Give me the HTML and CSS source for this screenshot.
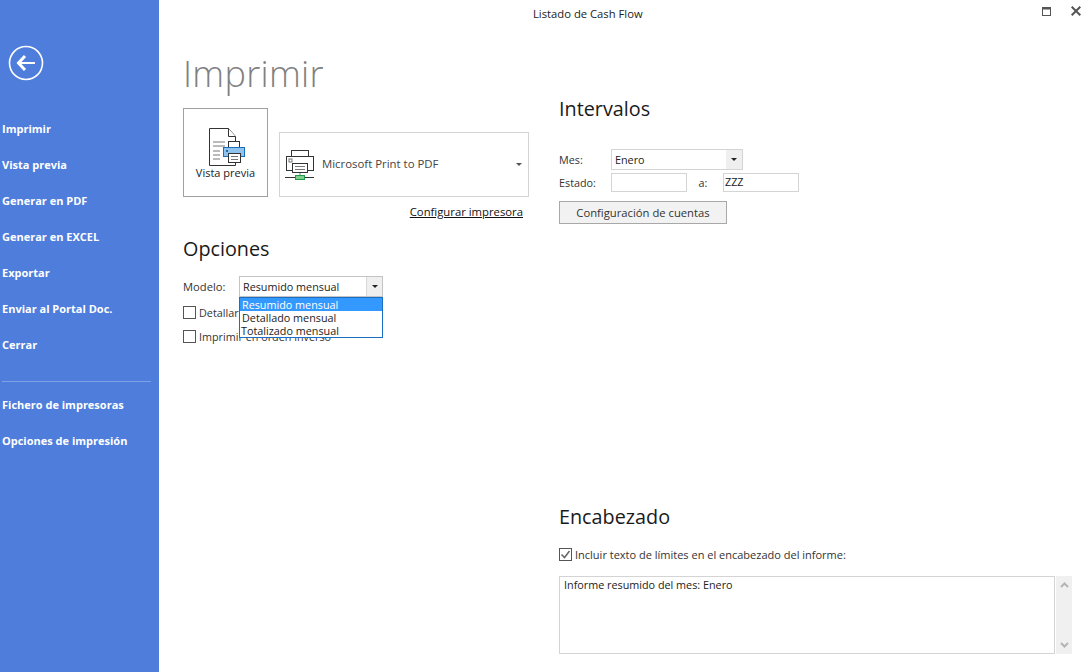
FILE: index.html
```html
<!DOCTYPE html>
<html lang="es">
<head>
<meta charset="utf-8">
<title>Listado de Cash Flow</title>
<link rel="stylesheet" href="styles.css">
</head>
<body>
<div class="window">
  <aside class="sidebar">
    <div class="back">
      <svg width="36" height="36" viewBox="0 0 36 36"><circle cx="18" cy="18" r="16.5" fill="none" stroke="#fff" stroke-width="1.6"/><path d="M10 18h17" stroke="#fff" stroke-width="2" fill="none"/><path d="M17 11L10.500 18l6.500 7" stroke="#fff" stroke-width="3" fill="none"/></svg>
    </div>
    <nav class="nav">
      <a>Imprimir</a><a>Vista previa</a><a>Generar en PDF</a><a>Generar en EXCEL</a><a>Exportar</a><a>Enviar al Portal Doc.</a><a>Cerrar</a>
    </nav>
    <hr class="nav-rule">
    <nav class="nav">
      <a>Fichero de impresoras</a><a>Opciones de impresión</a>
    </nav>
  </aside>
  <main class="content">
    <header class="titlebar">
      <span class="window-title">Listado de Cash Flow</span>
      <div class="window-btns">
        <svg width="9" height="9" viewBox="0 0 9 9"><rect x=".5" y=".5" width="8" height="8" fill="none" stroke="#555"/><rect x="0" y="0" width="9" height="2.5" fill="#555"/></svg>
        <svg width="10" height="10" viewBox="0 0 10 10"><path d="M.7.7l8.600 8.600M9.300.7L.7 9.300" stroke="#555" stroke-width="2" fill="none"/></svg>
      </div>
    </header>
    <div class="panels">
      <section class="col-left">
        <h1 class="page-title">Imprimir</h1>
        <div class="print-row">
          <button class="preview-btn">
            <svg width="37" height="38" viewBox="0 0 37 38">
              <path d="M.5.5h19l7 8v29H.5z" fill="#fff" stroke="#333"/>
              <path d="M19.500.5v8h7" fill="#fff" stroke="#333"/>
              <path d="M4 14h12M4 18h12M4 23h7M4 27h7M4 31h7" stroke="#777"/>
              <rect x="19.500" y="13.500" width="11" height="8" fill="#fff" stroke="#333"/>
              <rect x="14.500" y="19.500" width="21" height="9" fill="#90c2ee" stroke="#1b6fb5"/>
              <rect x="17" y="22" width="2" height="2" fill="#1b6fb5"/>
              <rect x="19.500" y="25.500" width="12" height="9" fill="#fff" stroke="#333"/>
              <path d="M22 28.500h7M22 31.500h7" stroke="#777"/>
            </svg>
            <span>Vista previa</span>
          </button>
          <div class="printer-select">
            <svg class="printer-icon" width="32" height="32" viewBox="0 0 32 32">
              <rect x="7.500" y="1.500" width="17" height="6" fill="#fff" stroke="#333"/>
              <rect x="2.500" y="7.500" width="27" height="14" fill="#fff" stroke="#333"/>
              <rect x="5" y="10" width="3" height="3" fill="#fff" stroke="#777"/>
              <rect x="8.500" y="14.500" width="15" height="9" fill="#fff" stroke="#333"/>
              <path d="M11 17.500h10M11 20.500h10" stroke="#777"/>
              <path d="M16 24v4" stroke="#777"/>
              <path d="M1 28.500h29" stroke="#333"/>
              <rect x="11.500" y="26.500" width="9" height="4" fill="#7fd08f" stroke="#1d9a4a"/>
            </svg>
            <span class="printer-name">Microsoft Print to PDF</span>
            <i class="caret caret-small"></i>
          </div>
        </div>
        <div class="config-row"><a class="config-link">Configurar impresora</a></div>
        <h2 class="heading heading-opciones">Opciones</h2>
        <div class="model-row">
          <label class="field-label model-label">Modelo:</label>
          <div class="combo model-combo">
            <span class="combo-text">Resumido mensual</span>
            <span class="combo-btn"><i class="caret"></i></span>
            <ul class="dropdown">
              <li class="selected">Resumido mensual</li>
              <li>Detallado mensual</li>
              <li class="flush">Totalizado mensual</li>
            </ul>
          </div>
        </div>
        <div class="check-row"><i class="checkbox"></i><span>Detallar cuentas</span></div>
        <div class="check-row"><i class="checkbox"></i><span>Imprimir en orden inverso</span></div>
      </section>
      <section class="col-right">
        <h2 class="heading heading-intervalos">Intervalos</h2>
        <div class="form-row mes-row">
          <label class="field-label range-label">Mes:</label>
          <div class="combo mes-combo">
            <span class="combo-text">Enero</span>
            <span class="combo-btn"><i class="caret"></i></span>
          </div>
        </div>
        <div class="form-row estado-row">
          <label class="field-label range-label">Estado:</label>
          <div class="input input-from"></div>
          <label class="field-label to-label">a:</label>
          <div class="input input-to">ZZZ</div>
        </div>
        <button class="accounts-btn">Configuración de cuentas</button>
        <h2 class="heading heading-encabezado">Encabezado</h2>
        <div class="check-row include-row">
          <i class="checkbox checked"><svg width="11" height="11" viewBox="0 0 11 11"><path d="M1.500 5.500l3 3 5-6.500" stroke="#666" stroke-width="1.500" fill="none"/></svg></i>
          <span>Incluir texto de límites en el encabezado del informe:</span>
        </div>
        <div class="memo-wrap">
          <div class="memo">Informe resumido del mes: Enero</div>
          <div class="scrollbar">
            <svg width="9" height="6" viewBox="0 0 9 6"><path d="M1 5l3.500-3.500L8 5" stroke="#b5b5b5" stroke-width="2" fill="none"/></svg>
            <svg width="9" height="6" viewBox="0 0 9 6"><path d="M1 1l3.500 3.500L8 1" stroke="#b5b5b5" stroke-width="2" fill="none"/></svg>
          </div>
        </div>
      </section>
    </div>
  </main>
</div>
</body>
</html>
```
FILE: styles.css
```css
* { box-sizing: border-box; }
html, body { margin: 0; height: 100%; }
body {
  font-family: "Open Sans", "Noto Sans", sans-serif;
  font-size: 10.8px;
  color: #222;
  background: #fff;
  overflow: hidden;
}
.window { display: flex; width: 1091px; height: 672px; }
.sidebar {
  width: 159px;
  flex: none;
  background: #4e7ddc;
  color: #fff;
  padding-top: 45px;
}
.back { height: 36px; padding-left: 8px; margin-bottom: 29px; }
.back svg { display: block; }
.nav a {
  display: flex;
  align-items: center;
  height: 36px;
  padding-left: 2px;
  font-weight: 700;
  font-size: 11px;
}
.nav-rule {
  margin: 19px 8px 4px 2px;
  border: 0;
  border-top: 1px solid #7fa2e6;
}
.content { flex: 1; min-width: 0; display: flex; flex-direction: column; }
.titlebar { height: 28px; flex: none; display: flex; align-items: center; position: relative; }
.window-title { margin: -2px 0 0 374px; font-size: 11.25px; }
.window-btns {
  margin-left: auto;
  display: flex;
  gap: 20px;
  align-items: center;
  padding-right: 10px;
  margin-top: -6px;
}
.window-btns svg { display: block; }
.panels { flex: 1; display: flex; padding-left: 24px; }
.col-left { width: 346px; flex: none; }
.col-right { flex: 1; margin-left: 30px; min-width: 0; }
.page-title {
  margin: 24px 0 0;
  font-size: 36px;
  line-height: 44px;
  font-weight: 300;
  color: #808080;
  letter-spacing: .3px;
}
.print-row { display: flex; align-items: flex-end; gap: 11px; margin-top: 12px; }
.preview-btn {
  width: 85px;
  height: 89px;
  padding: 19px 0 0;
  background: #fff;
  border: 1px solid #a0a0a0;
  display: flex;
  flex-direction: column;
  align-items: center;
  font: inherit;
  font-size: 11px;
  color: #222;
}
.preview-btn svg { display: block; margin-left: 4px; }
.preview-btn span { margin-top: -1px; }
.printer-select {
  flex: 1;
  height: 65px;
  border: 1px solid #d4d4d4;
  display: flex;
  align-items: center;
  padding: 0 6px 0 4px;
}
.printer-icon { flex: none; }
.printer-name { margin: -2px 0 0 6px; font-size: 11.4px; color: #444; }
.caret {
  display: block;
  width: 0;
  height: 0;
  border-left: 3px solid transparent;
  border-right: 3px solid transparent;
  border-top: 3px solid #222;
}
.caret-small { margin-left: auto; border-top-color: #555; }
.config-row { display: flex; justify-content: flex-end; padding-right: 6px; margin-top: 7px; }
.config-link { font-size: 11.3px; color: #111; text-decoration: underline; }
.heading { margin: 0; font-size: 19.8px; line-height: 26px; font-weight: 400; color: #1a1a1a; }
.heading-opciones { margin-top: 17px; }
.model-row { display: flex; align-items: center; margin-top: 14px; position: relative; }
.field-label { color: #333; }
.model-label { width: 56px; flex: none; font-size: 11.2px; }
.combo {
  display: flex;
  align-items: stretch;
  border: 1px solid #c4c4c4;
  background: #fff;
  position: relative;
}
.model-combo { width: 144px; height: 21px; }
.combo-text { flex: 1; display: flex; align-items: center; padding-left: 3px; color: #222; }
.combo-btn { width: 16px; background: #efefef; display: flex; align-items: center; justify-content: center; border-left: 1px solid #d8d8d8; }
.dropdown {
  position: absolute;
  left: -1px;
  top: 20px;
  width: 144px;
  height: 41px;
  margin: 0;
  padding: 0;
  list-style: none;
  background: #fff;
  border: 1px solid #1a6fc4;
  z-index: 2;
  line-height: 13px;
}
.dropdown li { height: 13px; padding-left: 2px; color: #222; }
.dropdown li.selected { background: #3399ff; color: #fff; }
.dropdown li.flush { padding-left: 1px; }
.check-row { display: flex; align-items: center; gap: 3px; height: 24px; color: #333; }
.model-row + .check-row { margin-top: 3px; }
.checkbox {
  width: 13px;
  height: 13px;
  flex: none;
  border: 1px solid #555;
  display: block;
  background: #fff;
}
.checkbox.checked svg { display: block; }
.heading-intervalos { margin-top: 68px; }
.form-row { display: flex; align-items: center; }
.mes-row { margin-top: 27px; }
.estado-row { margin-top: 3px; }
.range-label { width: 52px; flex: none; }
.mes-combo { width: 132px; height: 21px; border-color: #d4d4d4; }
.mes-combo .combo-text { padding-left: 3px; }
.mes-combo .combo-btn { border-left: 0; }
.input { height: 19px; border: 1px solid #d4d4d4; background: #fff; line-height: 15px; padding-left: 1px; }
.input-from { width: 76px; }
.to-label { width: 36px; padding-right: 4px; text-align: center; flex: none; }
.input-to { width: 76px; }
.accounts-btn {
  display: block;
  width: 168px;
  height: 23px;
  margin-top: 9px;
  padding: 0;
  border: 1px solid #a8a8a8;
  background: #f2f2f2;
  font: inherit;
  font-size: 11.25px;
  color: #333;
}
.heading-encabezado { margin-top: 280px; }
.include-row { margin-top: 15px; height: 18px; font-size: 11px; }
.memo-wrap { display: flex; margin-top: 13px; gap: 1px; }
.memo {
  width: 496px;
  height: 78px;
  border: 1px solid #d4d4d4;
  padding: 0 4px;
  color: #222;
}
.scrollbar {
  width: 16px;
  height: 78px;
  background: #f0f0f0;
  display: flex;
  flex-direction: column;
  justify-content: space-between;
  align-items: center;
  padding: 6px 0;
}
.scrollbar svg { display: block; }
```
